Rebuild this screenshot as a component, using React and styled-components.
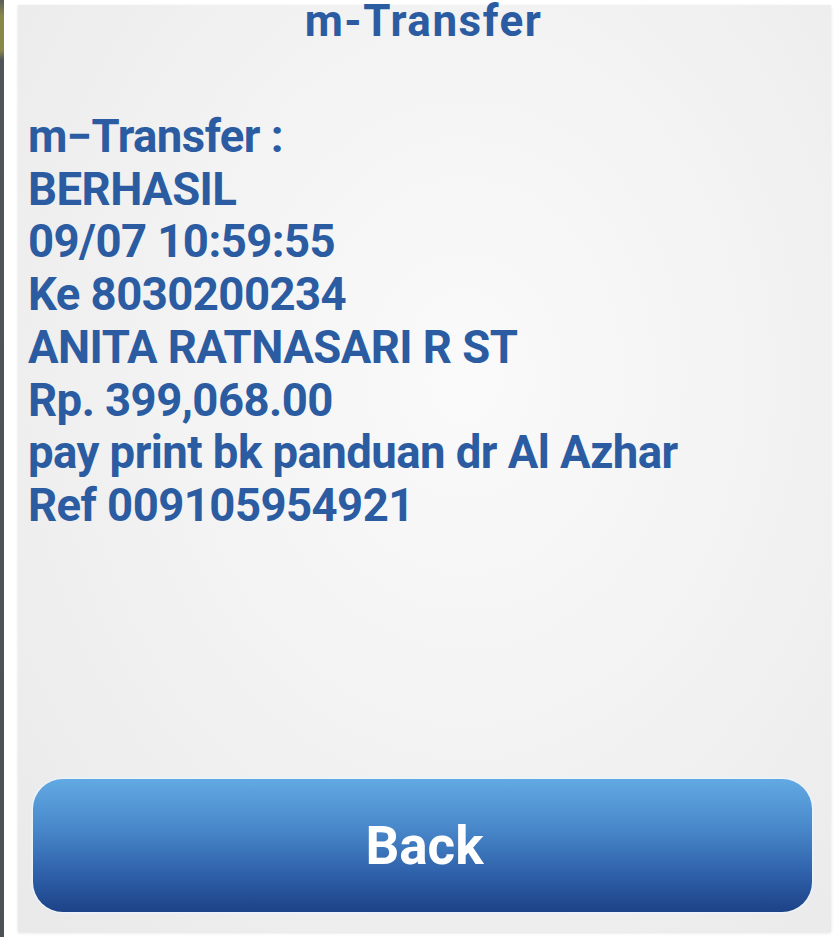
import styled, { createGlobalStyle } from "styled-components";

const GlobalStyle = createGlobalStyle`
  body {
    margin: 0;
    background: #ffffff;
    font-family: Roboto, "Liberation Sans", Arial, sans-serif;
  }
`;

const lines = [
  "m\u2212Transfer :",
  "BERHASIL",
  "09/07 10:59:55",
  "Ke 8030200234",
  "ANITA RATNASARI R ST",
  "Rp. 399,068.00",
  "pay print bk panduan dr Al Azhar",
  "Ref 009105954921",
];

const App = () => {
  return (
    <Page>
      <GlobalStyle />
      <EdgeStrip />
      <Panel>
        <Title>m-Transfer</Title>
        <Message>
          {lines.map((line) => (
            <Line key={line}>{line}</Line>
          ))}
        </Message>
        <BackButton type="button">Back</BackButton>
      </Panel>
    </Page>
  );
};

export default App;

const Page = styled.div`
  display: flex;
  width: 838px;
  height: 937px;
  overflow: hidden;
  background: #ffffff;
`;
const EdgeStrip = styled.div`
  width: 4px;
  flex-shrink: 0;
  background: linear-gradient(
    to bottom,
    #5a5d5a 0px,
    #8a8848 16px,
    #8a8848 50px,
    #4f5558 60px,
    #4b5256 100%
  );
`;
const Panel = styled.div`
  flex: 1;
  display: flex;
  flex-direction: column;
  margin: 5px 7px 5px 14px;
  background: radial-gradient(
    ellipse at 55% 40%,
    #fafafa 0%,
    #f3f3f3 45%,
    #e9e9e9 100%
  );
  box-shadow: 0 1px 3px rgba(0, 0, 0, 0.12);
`;
const Title = styled.div`
  text-align: center;
  font-size: 44px;
  font-weight: 700;
  line-height: 40px;
  margin-top: -4px;
  letter-spacing: 1.5px;
  color: #2b5ca2;
  padding-right: 2px;
`;
const Message = styled.div`
  display: flex;
  flex-direction: column;
  margin-top: 70px;
  padding-left: 10px;
  flex: 1;
`;
const Line = styled.div`
  font-size: 45.5px;
  font-weight: 700;
  line-height: 52.7px;
  letter-spacing: -0.55px;
  color: #2b5ca2;
  white-space: nowrap;
`;
const BackButton = styled.button`
  display: flex;
  align-items: center;
  justify-content: center;
  height: 133px;
  margin: 0 19px 20px 15px;
  border: none;
  border-radius: 30px;
  background: linear-gradient(
    to bottom,
    #62a9e3 0%,
    #4a8acc 35%,
    #2f62ab 70%,
    #1d4287 100%
  );
  box-shadow: 0 0 0 1.5px rgba(235, 244, 252, 0.9);
  color: #ffffff;
  font-family: Roboto, "Liberation Sans", Arial, sans-serif;
  font-size: 53px;
  font-weight: 700;
  padding: 0 0 0 4px;
`;
